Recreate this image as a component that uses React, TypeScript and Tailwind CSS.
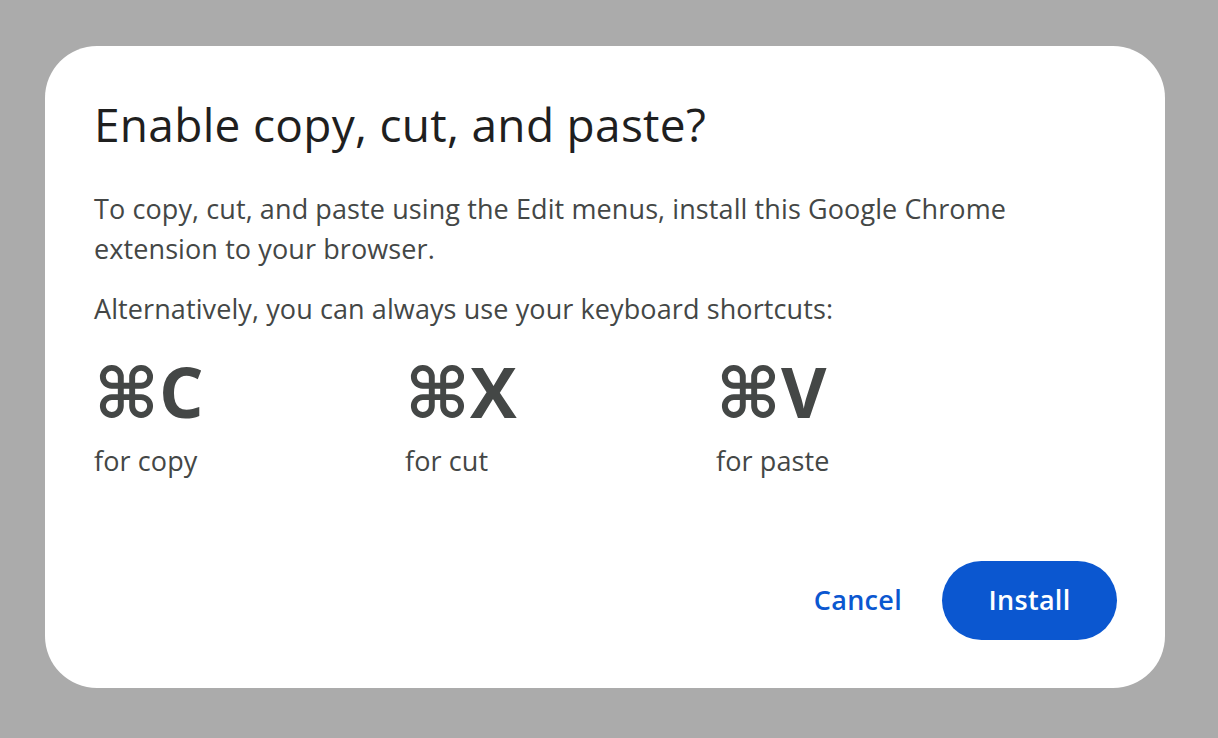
const SHORTCUTS = [
  { key: "C", label: "for copy" },
  { key: "X", label: "for cut" },
  { key: "V", label: "for paste" },
];

export default function App() {
  return (
    <div
      className="w-[1218px] h-[738px] bg-[#ababab] pl-[45px] pt-[46px]"
      style={{ fontFamily: "'Open Sans', Roboto, sans-serif" }}
    >
      <div className="w-[1120px] h-[642px] bg-white rounded-[52px] pl-[49px] pr-[48px] pt-[48px] pb-[48px] flex flex-col">
        <h1 className="text-[46px] leading-[60px] tracking-[0.3px] text-[#1f1f1f] font-normal">
          Enable copy, cut, and paste?
        </h1>
        <p className="mt-[35px] text-[27px] leading-[40px] tracking-[0.1px] text-[#444746] max-w-[960px]">
          To copy, cut, and paste using the Edit menus, install this Google Chrome extension to your browser.
        </p>
        <p className="mt-[20px] text-[27px] leading-[40px] tracking-[0.1px] text-[#444746]">
          Alternatively, you can always use your keyboard shortcuts:
        </p>
        <div className="mt-[24px] flex">
          {SHORTCUTS.map((s) => (
            <div key={s.key} className="w-[311px] flex flex-col">
              <span className="text-[70px] leading-[76px] font-bold text-[#444746]">
                <span style={{ fontFamily: "'DejaVu Sans', sans-serif" }}>⌘</span>
                <span className="tracking-[2px]">{s.key}</span>
              </span>
              <span className="mt-[9px] text-[27px] leading-[40px] tracking-[0.1px] text-[#444746]">{s.label}</span>
            </div>
          ))}
        </div>
        <div className="mt-auto flex items-center justify-end gap-[40px]">
          <button className="text-[27px] font-semibold tracking-[0.3px] text-[#0b57d0]">Cancel</button>
          <button className="w-[175px] h-[79px] rounded-full bg-[#0b57d0] text-white text-[27px] font-semibold tracking-[0.3px]">
            Install
          </button>
        </div>
      </div>
    </div>
  );
}
